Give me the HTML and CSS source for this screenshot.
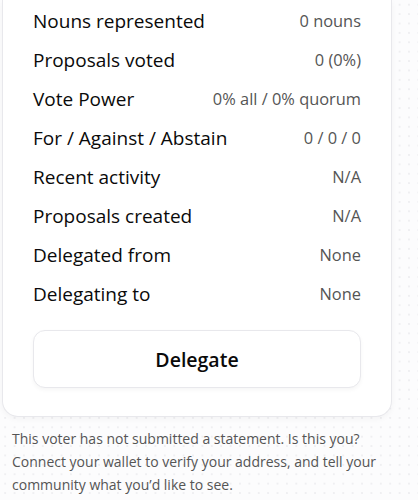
FILE: index.html
```html
<!DOCTYPE html>
<html>
<head>
<meta charset="utf-8">
<link rel="stylesheet" href="styles.css">
</head>
<body>
<div class="page">
  <div class="card">
    <div class="rows">
      <div class="row"><span class="label">Nouns represented</span><span class="value">0 nouns</span></div>
      <div class="row"><span class="label">Proposals voted</span><span class="value">0 (0%)</span></div>
      <div class="row"><span class="label">Vote Power</span><span class="value">0% all / 0% quorum</span></div>
      <div class="row"><span class="label">For / Against / Abstain</span><span class="value">0 / 0 / 0</span></div>
      <div class="row"><span class="label">Recent activity</span><span class="value">N/A</span></div>
      <div class="row"><span class="label">Proposals created</span><span class="value">N/A</span></div>
      <div class="row"><span class="label">Delegated from</span><span class="value">None</span></div>
      <div class="row"><span class="label">Delegating to</span><span class="value">None</span></div>
    </div>
    <button class="delegate">Delegate</button>
  </div>
  <p class="statement">This voter has not submitted a statement. Is this you? Connect your wallet to verify your address, and tell your community what you’d like to see.</p>
</div>
</body>
</html>
```
FILE: styles.css
```css
html, body {
  margin: 0;
  padding: 0;
}
body {
  background-color: #fcfcfd;
  background-image: radial-gradient(circle, #ececef 0.6px, transparent 1px);
  background-size: 9.4px 9.4px;
  background-position: 0.5px 0px;
  font-family: "Open Sans", sans-serif;
  width: 418px;
  height: 500px;
  overflow: hidden;
}
.page {
  padding-left: 2px;
}
.card {
  width: 390px;
  box-sizing: border-box;
  background: #fff;
  border: 1px solid #e8e8ec;
  border-top: none;
  border-radius: 0 0 16px 16px;
  box-shadow: 0 2px 6px rgba(0,0,0,0.04);
  padding: 1px 30px 28px 30px;
}
.rows {
  display: flex;
  flex-direction: column;
}
.row {
  display: flex;
  justify-content: space-between;
  align-items: center;
  height: 39px;
}
.label {
  font-size: 19px;
  color: #0a0a0a;
}
.value {
  font-size: 16.4px;
  color: #555;
}
.delegate {
  display: block;
  width: 100%;
  height: 58px;
  margin-top: 17px;
  background: #fff;
  border: 1px solid #e8e8ec;
  border-radius: 12px;
  box-shadow: 0 2px 4px rgba(0,0,0,0.04);
  font-family: inherit;
  font-size: 19.5px;
  font-weight: 600;
  color: #0a0a0a;
}
.statement {
  margin: 10px 0 0 10px;
  width: 400px;
  font-size: 14px;
  line-height: 23px;
  color: #555;
}
```
